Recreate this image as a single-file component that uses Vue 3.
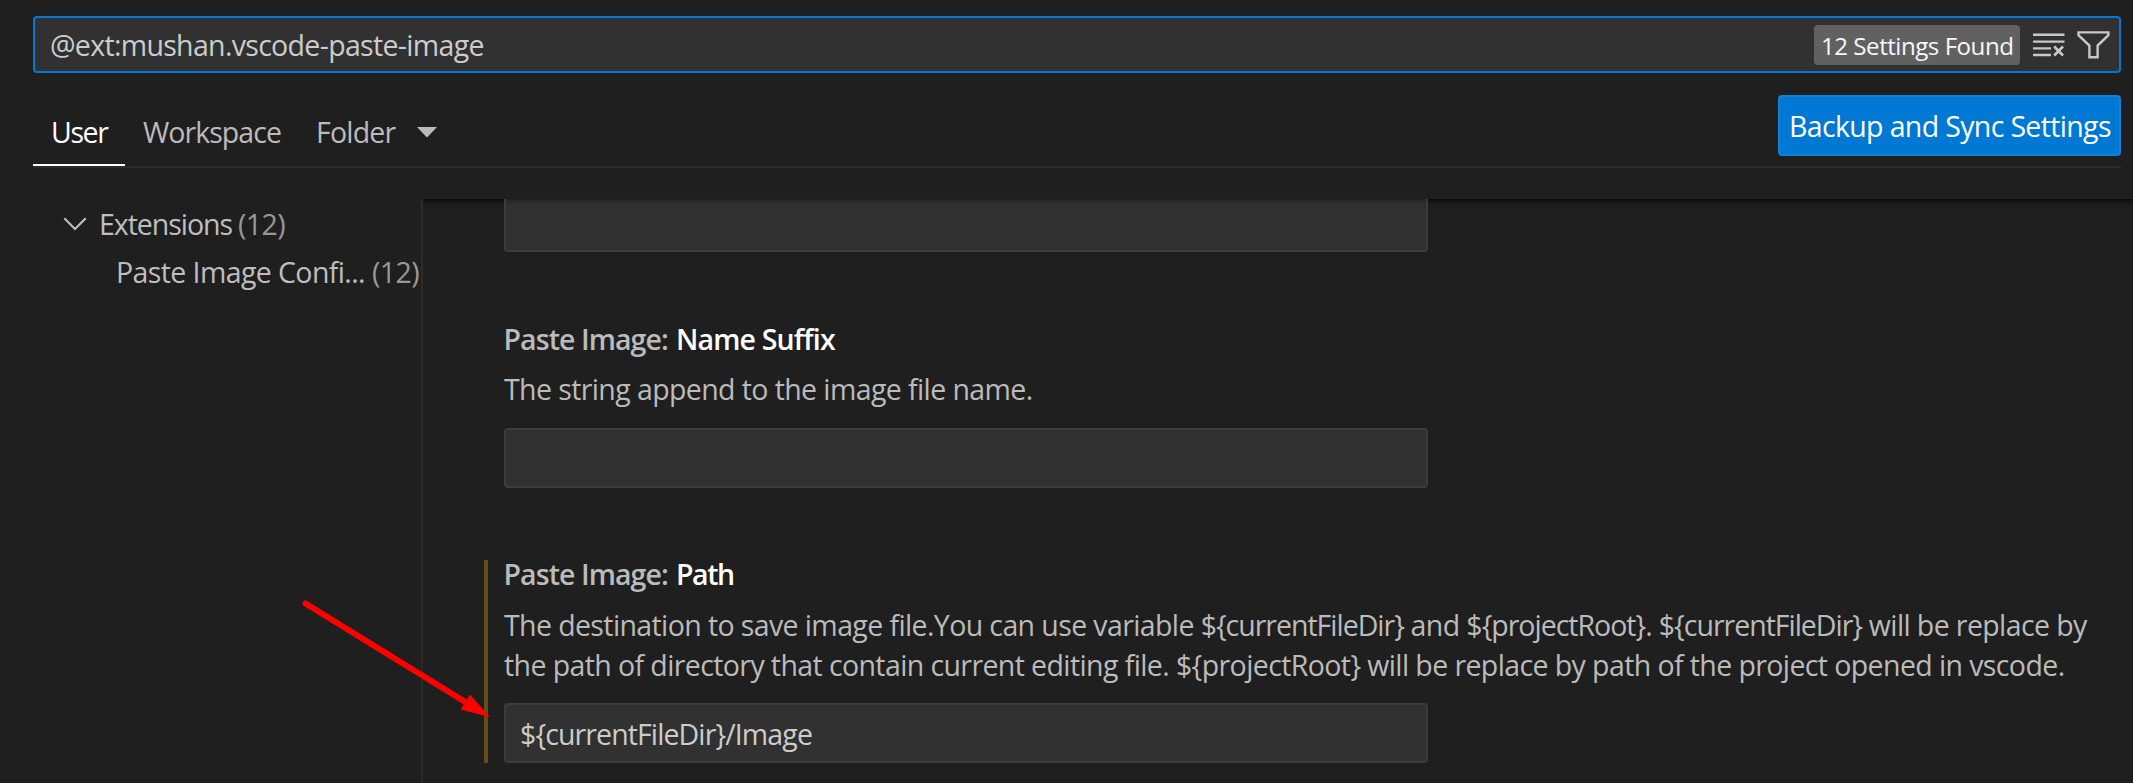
<script setup>
const tabs = [
  { label: 'User', cls: 'tab-user', active: true },
  { label: 'Workspace', cls: 'tab-workspace' },
  { label: 'Folder', cls: 'tab-folder', menu: true },
]
const line1 = [
  { text: 'The destination to save image file.You can use variable ' },
  { text: '${currentFileDir}', token: true },
  { text: ' and ' },
  { text: '${projectRoot}', token: true },
  { text: '. ' },
  { text: '${currentFileDir}', token: true },
  { text: ' will be replace by' },
]
const line2 = 'the path of directory that contain current editing file. ${projectRoot} will be replace by path of the project opened in vscode.'
const pathValue = '${currentFileDir}/Image'
</script>

<template>
  <div class="editor">
    <div class="search">
      <span class="query">@ext:mushan.vscode-paste-image</span>
      <span class="badge">12 Settings Found</span>
      <svg class="clear" width="32" height="24" viewBox="0 0 32 24">
        <path d="M0 1.7H31.5M0 8.6H31.5M0 15.4H18M0 22H18" fill="none" stroke="#c8c8c8" stroke-width="2.4" />
        <path d="M21.2 13.5L30 22.5M30 13.5L21.2 22.5" fill="none" stroke="#c8c8c8" stroke-width="2.6" />
      </svg>
      <svg class="filter" width="33" height="28" viewBox="0 0 33 28">
        <path d="M1.5 1.4H31.4V4.2L20.6 14.6V26.2H12.4V14.6L1.5 4.2Z" fill="none" stroke="#c8c8c8" stroke-width="2.4" />
      </svg>
    </div>

    <div class="header">
      <div class="tabs">
        <div v-for="t in tabs" :key="t.label" class="tab" :class="[t.cls, { active: t.active }]">
          <span>{{ t.label }}</span>
          <svg v-if="t.menu" class="caret" width="20" height="11" viewBox="0 0 20 11">
            <path d="M0 0H20L10.8 9.8Q10 10.6 9.2 9.8Z" fill="#bababa" />
          </svg>
        </div>
      </div>
      <button class="sync"><span>Backup and Sync Settings</span></button>
    </div>

    <div class="body">
      <nav class="toc">
        <div class="row group">
          <svg class="chevron" width="24" height="14" viewBox="0 0 24 14">
            <path d="M1.3 1.3L12 12L22.7 1.3" fill="none" stroke="#bebebe" stroke-width="2.1" />
          </svg>
          <span class="name ext">Extensions</span><span class="count">(12)</span>
        </div>
        <div class="row child">
          <span class="name paste">Paste Image Confi...</span><span class="count">(12)</span>
        </div>
      </nav>

      <main class="settings">
        <div class="field first"></div>
        <section class="item suffix">
          <h3><span class="cat">Paste Image:</span><span class="key key-suffix">Name Suffix</span></h3>
          <p class="desc"><span class="d0">The string append to the image file name.</span></p>
          <div class="field"></div>
        </section>
        <section class="item path">
          <h3><span class="cat">Paste Image:</span><span class="key key-path">Path</span></h3>
          <p class="desc">
            <span class="d1"><span v-for="(s, i) in line1" :key="i" :class="{ token: s.token }">{{ s.text }}</span></span>
            <span class="d2">{{ line2 }}</span>
          </p>
          <div class="field"><span class="value">{{ pathValue }}</span></div>
        </section>
      </main>
    </div>

    <svg class="arrow" width="190" height="122" viewBox="0 0 190 122">
      <path d="M4.5 4.5L166 104" stroke="#ff0000" stroke-width="6" stroke-linecap="round" />
      <path d="M169 95.5L189 118.3L159.5 110.5Z" fill="#ff0000" />
    </svg>
  </div>
</template>

<style>
body { background: #1f1f1f; }
</style>

<style scoped>
.editor {
  position: relative;
  display: flex;
  flex-direction: column;
  box-sizing: border-box;
  width: 2133px;
  height: 783px;
  padding-top: 16px;
  overflow: hidden;
  background: #1f1f1f;
  color: #bbbbbb;
  font: 400 28.5px/40px "Open Sans", "Noto Sans", sans-serif;
  white-space: pre;
}
svg { display: block; flex: none; }
.search {
  display: flex;
  align-items: center;
  box-sizing: border-box;
  height: 57px;
  margin: 0 12px 0 33px;
  padding: 0 9px 0 15px;
  border: 2px solid #0078d4;
  border-radius: 4px;
  background: #313131;
  color: #cccccc;
}
.query { flex: 1; padding-top: 1px; letter-spacing: -0.68px; }
.badge {
  box-sizing: border-box;
  width: 206px;
  height: 40px;
  margin-right: 13px;
  padding-left: 7px;
  border-radius: 4px;
  background: #616161;
  color: #f8f8f8;
  font-size: 24.1px;
  line-height: 41px;
  letter-spacing: -0.48px;
}
.clear { margin-right: 12px; }
.header {
  display: flex;
  justify-content: space-between;
  box-sizing: border-box;
  height: 95px;
  margin: 0 12px 0 33px;
  border-bottom: 2px solid #2b2b2b;
}
.tabs { display: flex; padding-top: 22px; }
.tab {
  display: flex;
  align-items: center;
  box-sizing: border-box;
  height: 71px;
  padding-top: 4px;
  border-bottom: 2px solid transparent;
}
.tab-user { width: 92px; padding-left: 18px; letter-spacing: -1.4px; }
.tab-workspace { width: 174px; padding-left: 18px; letter-spacing: -0.96px; }
.tab-folder { padding-left: 17px; letter-spacing: -0.78px; }
.tab.active { color: #ffffff; border-bottom-color: #ffffff; }
.caret { margin: 1px 0 0 22px; }
.sync {
  box-sizing: border-box;
  width: 343px;
  height: 61px;
  margin: 22px 0 0;
  padding: 0 0 0 9px;
  border: 2px solid #1281d6;
  border-radius: 4px;
  background: #0078d4;
  color: #ffffff;
  font: inherit;
  text-align: left;
  letter-spacing: -0.65px;
}
.body { display: flex; height: 584px; margin-top: 31px; }
.toc { box-sizing: border-box; width: 423px; padding-top: 1px; border-right: 2px solid #2b2b2b; }
.row { display: flex; align-items: center; height: 48px; }
.group { padding-left: 63px; }
.chevron { margin-right: 12px; }
.child { padding-left: 116px; }
.name { color: #bebebe; }
.ext { width: 139px; letter-spacing: -1.04px; }
.paste { width: 256px; letter-spacing: -0.6px; }
.count { color: #989898; letter-spacing: -0.6px; }
.settings { flex: 1; padding-left: 61px; box-shadow: inset 0 8px 6px -7px #000000; }
.field {
  display: flex;
  align-items: center;
  box-sizing: border-box;
  width: 924px;
  height: 60px;
  margin-left: 20px;
  padding: 2px 0 0 14px;
  border: 2px solid #3c3c3c;
  border-radius: 4px;
  background: #313131;
  color: #cccccc;
}
.first {
  height: 53px;
  border-top: 0;
  border-radius: 0 0 4px 4px;
  box-shadow: inset 0 8px 6px -7px #1a1a1a;
}
.suffix { margin-top: 67px; }
h3 { display: flex; margin: 0; padding-left: 19.5px; font-size: 28.5px; font-weight: 600; }
.cat { width: 172.5px; letter-spacing: -0.93px; }
.key { color: #ffffff; }
.key-suffix { letter-spacing: -0.83px; }
.key-path { letter-spacing: -1.4px; }
.desc { display: flex; flex-direction: column; margin: 10px 0 19px; padding-left: 20px; }
.d0 { letter-spacing: -0.6px; }
.d1 { letter-spacing: -0.61px; }
.token { letter-spacing: -1.01px; }
.d2 { letter-spacing: -0.6px; }
.path {
  display: flex;
  flex-direction: column;
  box-sizing: border-box;
  height: 203px;
  margin-top: 72px;
  border-left: 4px solid #674c16;
}
.path h3 { margin-top: -6px; padding-left: 15.5px; }
.path .desc { margin: 11px 0 18px; padding-left: 16px; }
.path .field { margin-left: 16px; }
.value { letter-spacing: -0.89px; }
.arrow { position: absolute; left: 301px; top: 599px; }
</style>
